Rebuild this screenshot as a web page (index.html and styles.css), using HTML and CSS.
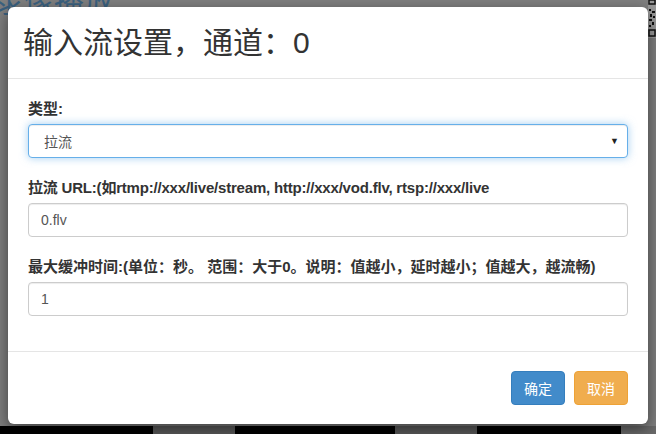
FILE: index.html
```html
<!DOCTYPE html>
<html lang="zh-CN">
<head>
<meta charset="utf-8">
<title>输入流设置</title>
<link rel="stylesheet" href="styles.css">
</head>
<body>
<div class="page">
  <div class="page-top">
    <span class="page-link">录像播放</span>
    <svg class="qr" width="8" height="38" viewBox="0 0 8 38">
      <rect x="0" y="0" width="8" height="38" fill="#9a9a9a"/>
      <rect x="1" y="0" width="6" height="4" fill="none" stroke="#111" stroke-width="1.5"/>
      <rect x="1" y="9" width="2" height="2" fill="#111"/>
      <rect x="4" y="11" width="3" height="2" fill="#111"/>
      <rect x="2" y="14" width="2" height="3" fill="#111"/>
      <rect x="5" y="16" width="2" height="2" fill="#111"/>
      <rect x="1" y="19" width="3" height="2" fill="#111"/>
      <rect x="4" y="22" width="2" height="3" fill="#111"/>
      <rect x="1" y="25" width="2" height="2" fill="#111"/>
      <rect x="1" y="30" width="6" height="6" fill="none" stroke="#111" stroke-width="1.5"/>
    </svg>
  </div>
  <div class="page-fill"></div>
  <div class="page-bottom">
    <span class="seg black w153"></span>
    <span class="seg gray w82"></span>
    <span class="seg black w160"></span>
    <span class="seg gray w82"></span>
    <span class="seg black w144"></span>
    <span class="seg gray w35"></span>
  </div>
</div>

<div class="modal">
  <div class="modal-header">
    <h4 class="modal-title">输入流设置，通道：0</h4>
  </div>
  <div class="modal-body">
    <div class="form-group">
      <label class="control-label">类型:</label>
      <div class="select-box focused">
        <span class="select-value">拉流</span>
        <span class="caret">▼</span>
      </div>
    </div>
    <div class="form-group">
      <label class="control-label tight">拉流 URL:(如rtmp://xxx/live/stream, http://xxx/vod.flv, rtsp://xxx/live</label>
      <input class="form-control" type="text" value="0.flv">
    </div>
    <div class="form-group">
      <label class="control-label">最大缓冲时间:(单位：秒。 范围：大于0。说明：值越小，延时越小；值越大，越流畅)</label>
      <input class="form-control" type="text" value="1">
    </div>
  </div>
  <div class="modal-footer">
    <button class="btn btn-primary">确定</button>
    <button class="btn btn-warning">取消</button>
  </div>
</div>
</body>
</html>
```
FILE: styles.css
```css
* { box-sizing: border-box; }
html, body { margin: 0; padding: 0; }
body {
  width: 656px;
  height: 434px;
  overflow: hidden;
  position: relative;
  background: #7f7f7f;
  font-family: "Liberation Sans", Arial, "Noto Sans CJK SC", sans-serif;
  color: #333;
}
.page {
  display: flex;
  flex-direction: column;
  height: 434px;
}
.page-top {
  display: flex;
  justify-content: space-between;
  align-items: flex-start;
  height: 40px;
  overflow: hidden;
}
.page-link {
  font-family: "Noto Sans CJK SC", sans-serif;
  font-size: 30px;
  line-height: 30px;
  color: #2a5a80;
  margin-top: -16px;
  margin-left: -6px;
  opacity: 0.8;
}
.qr { display: block; }
.page-fill { flex: 1; }
.page-bottom {
  display: flex;
  height: 8px;
}
.seg { display: block; height: 8px; }
.black { background: #000; }
.gray { background: #5a5a5a; }
.w153 { width: 153px; }
.w82 { width: 82px; }
.w160 { width: 160px; }
.w144 { width: 144px; }
.w35 { flex: 1; background: #6a6a6a; }

.modal {
  position: absolute;
  left: 8px;
  top: 7px;
  width: 640px;
  background: #fff;
  border-radius: 6px;
  box-shadow: 0 5px 15px rgba(0,0,0,.5);
}
.modal-header {
  padding: 15px;
  border-bottom: 1px solid #e5e5e5;
}
.modal-title {
  margin: 0;
  font-size: 30px;
  line-height: 41px;
  font-weight: normal;
  color: #333;
  font-family: "Liberation Sans", Arial, "Noto Sans CJK SC", sans-serif;
}
.modal-body {
  padding: 20px 20px 15px;
}
.form-group {
  margin-bottom: 20px;
  display: flex;
  flex-direction: column;
}
.control-label {
  display: block;
  font-size: 15px;
  line-height: 20px;
  font-weight: bold;
  margin-bottom: 5px;
  color: #333;
  white-space: nowrap;
}
.control-label.tight {
  letter-spacing: -0.2px;
}
.select-box, .form-control {
  height: 34px;
  width: 600px;
  border: 1px solid #ccc;
  border-radius: 4px;
  font-size: 14px;
  color: #555;
  font-family: "Liberation Sans", Arial, "Noto Sans CJK SC", sans-serif;
  background: #fff;
  box-shadow: inset 0 1px 1px rgba(0,0,0,.075);
}
.form-control {
  padding: 6px 12px;
  outline: none;
}
.select-box {
  display: flex;
  align-items: center;
  justify-content: space-between;
  padding: 0 8px 0 15px;
}
.select-box.focused {
  border-color: #66afe9;
  box-shadow: inset 0 1px 1px rgba(0,0,0,.075), 0 0 8px rgba(102,175,233,.6);
}
.caret {
  font-size: 9px;
  color: #222;
}
.modal-footer {
  display: flex;
  justify-content: flex-end;
  gap: 9px;
  padding: 19px 20px 19px;
  border-top: 1px solid #e5e5e5;
}
.btn {
  height: 34px;
  width: 54px;
  padding: 0;
  border-radius: 4px;
  font-size: 14px;
  color: #fff;
  font-family: "Liberation Sans", Arial, "Noto Sans CJK SC", sans-serif;
  border: 1px solid transparent;
}
.btn-primary { background: #428bca; border-color: #357ebd; }
.btn-warning { background: #f0ad4e; border-color: #eea236; }
```
